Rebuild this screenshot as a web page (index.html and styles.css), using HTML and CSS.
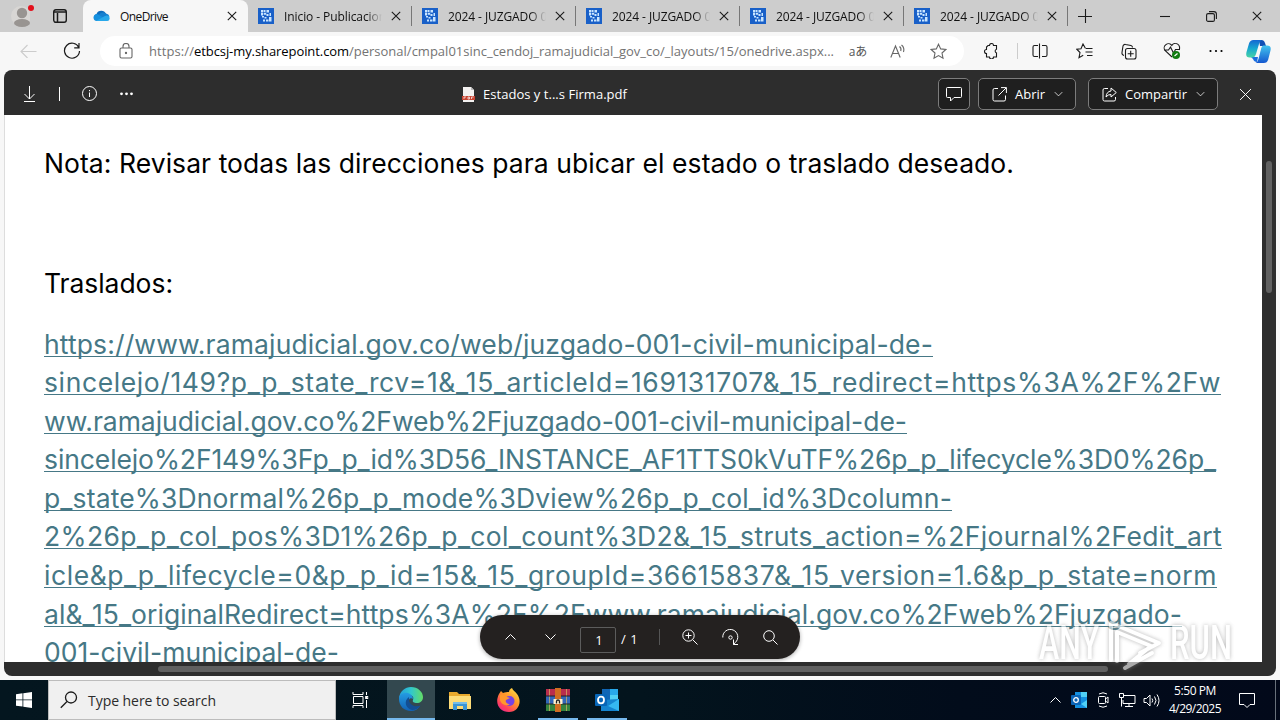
FILE: index.html
```html
<!DOCTYPE html>
<html lang="es">
<head>
<meta charset="utf-8">
<title>OneDrive</title>
<link rel="stylesheet" href="styles.css">
</head>
<body>
<svg class="defs" width="0" height="0">
  <symbol id="x" viewBox="0 0 10 10"><path d="M.8.8l8.4 8.4M9.2.8L.8 9.2"/></symbol>
  <symbol id="fav" viewBox="0 0 16 16"><rect width="16" height="16" fill="#1960c8"/><path fill="#c9e5ff" d="M3 2h2v2.500H3zM5.500 2h2v2h-2zM8.500 2h2.500v2.500H8.500zM3 5h2v2.500H3zM5.700 4.800h2.500v2H5.700zM4 8h2v1.500H4zM8.500 6h2v2h-2zM11.500 5h1.500v3h-1.500zM6.500 9h2v1.500h-2zM5 11.500h2v2H5zM8 11.500h2.500v2H8zM11 9h2.500v4.500H11z"/></symbol>
  <symbol id="chev" viewBox="0 0 12 8"><path d="M1 1.500l5 5 5-5"/></symbol>
</svg>

<header class="tabs">
  <div class="profile"><svg width="30" height="32" viewBox="0 0 30 32"><circle cx="21" cy="16" r="10" fill="#d8d6d4"/><circle cx="22" cy="13" r="5.200" fill="#989491"/><ellipse cx="22" cy="23" rx="8" ry="4" fill="#989491"/></svg><i class="dot"></i></div>
  <div class="workspace"><svg width="14" height="14" viewBox="0 0 14 14" class="ln"><rect x=".7" y=".7" width="12.600" height="12.600" rx="2.200" stroke-width="1.400"/><path d="M1 3h12M4.500 4v9" stroke-width="1.500"/></svg></div>
  <div class="tab active"><svg class="ico" width="17" height="12" viewBox="0 0 17 12"><path d="M3 10.500A3.400 3.400 0 013.500 4 5.200 5.200 0 0113 3.800L8 9z" fill="#0f6cbd"/><path d="M6 4.500a5 5 0 017-1 4 4 0 013.500 3L9 9z" fill="#1580d0"/><path d="M.5 8a3.500 3.500 0 015-3.500L15 11H4A3.500 3.500 0 01.5 8z" fill="#1490df"/><path d="M3 11l9-5a3 3 0 014.700 2.500A2.700 2.700 0 0114 11z" fill="#28a8ea"/></svg><span class="name"><span data-fit="48">OneDrive</span></span><svg class="cl ln" width="10" height="10"><use href="#x"/></svg></div>
  <div class="tab"><svg class="ico" width="16" height="16"><use href="#fav"/></svg><span class="name fade"><span data-fit="102">Inicio - Publicacion</span></span><svg class="cl ln" width="10" height="10"><use href="#x"/></svg></div>
  <div class="tab"><svg class="ico" width="16" height="16"><use href="#fav"/></svg><span class="name fade"><span data-fit="106">2024 - JUZGADO 00</span></span><svg class="cl ln" width="10" height="10"><use href="#x"/></svg></div>
  <div class="tab"><svg class="ico" width="16" height="16"><use href="#fav"/></svg><span class="name fade"><span data-fit="106">2024 - JUZGADO 00</span></span><svg class="cl ln" width="10" height="10"><use href="#x"/></svg></div>
  <div class="tab"><svg class="ico" width="16" height="16"><use href="#fav"/></svg><span class="name fade"><span data-fit="106">2024 - JUZGADO 00</span></span><svg class="cl ln" width="10" height="10"><use href="#x"/></svg></div>
  <div class="tab"><svg class="ico" width="16" height="16"><use href="#fav"/></svg><span class="name fade"><span data-fit="106">2024 - JUZGADO 00</span></span><svg class="cl ln" width="10" height="10"><use href="#x"/></svg></div>
  <div class="plus"><svg class="ln" width="14" height="14" viewBox="0 0 14 14"><path d="M7.500 0v14M0 7.500h14"/></svg></div>
  <div class="win"><svg class="ln" width="10" height="10" viewBox="0 0 10 10"><path d="M0 5.500h10"/></svg></div>
  <div class="win"><svg class="ln" width="11" height="11" viewBox="0 0 11 11"><rect x=".6" y="2.600" width="7.800" height="7.800" rx="1.500"/><path d="M3 .6h4.900a2.500 2.500 0 012.500 2.500V8"/></svg></div>
  <div class="win"><svg class="ln" width="10" height="10"><use href="#x"/></svg></div>
</header>

<nav class="bar">
  <div class="nv back"><svg class="ln pale" width="17" height="14" viewBox="0 0 17 14"><path d="M16.500 7.500H1M7.500 1L1 7.500 7.500 14"/></svg></div>
  <div class="nv"><svg class="ln" width="18" height="18" viewBox="0 0 18 18"><path d="M15.800 5.500A7.500 7.500 0 1016.500 9M16 1v4.800h-4.800" stroke-width="1.200"/></svg></div>
  <div class="url">
    <svg class="ln grey lock" width="14" height="16" viewBox="0 0 14 16"><rect x="1" y="5" width="12" height="10" rx="1.500"/><path d="M4 5V3.500a3 3 0 016 0V5"/><circle cx="7" cy="10" r=".6" fill="#666"/></svg>
    <span class="addr"><span data-fit="45">https://</span><b data-fit="155">etbcsj-my.sharepoint.com</b><span data-fit="485">/personal/cmpal01sinc_cendoj_ramajudicial_gov_co/_layouts/15/onedrive.aspx...</span></span>
    <div class="pi tr">aあ</div>
    <div class="pi"><svg class="ln grey" width="16" height="14" viewBox="0 0 16 14"><path d="M.8 13.500L5.500 2l4.700 11.500M2.500 9.500h6M9.500 2.500a4 4 0 011.200 4.500M11.500 1a6.500 6.500 0 012 7"/></svg></div>
    <div class="pi"><svg class="ln grey" width="17" height="17" viewBox="0 0 17 17"><path d="M8.500 1.200l2.200 4.700 5.100.6-3.800 3.500 1 5.200-4.500-2.600L4 15.200l1-5.200-3.800-3.500 5.100-.6z"/></svg></div>
  </div>
  <div class="tool"><svg class="ln" width="16" height="16" viewBox="0 0 16 16"><path d="M5 2.500H6.500a2 2 0 014 0H13.500V6.200a2 2 0 000 3.800v4h-3a2 2 0 01-4 0H3.500V10.500a2 2 0 110-4V4z" stroke-width="1.100"/></svg></div>
  <div class="vs"></div>
  <div class="tool"><svg class="ln" width="16" height="16" viewBox="0 0 16 16"><path d="M6 2.500H2.500a1.500 1.500 0 00-1.500 1.500v8a1.500 1.500 0 001.500 1.500H6M10 2.500h3.500A1.500 1.500 0 0115 4v8a1.500 1.500 0 01-1.500 1.500H10M7.500 .5v15"/></svg></div>
  <div class="tool"><svg class="ln" width="17" height="16" viewBox="0 0 17 16"><path d="M9.500 5.500L7 1 5 5.800.8 6.200 4 9.500l-1 5.200 4.200-2.500M10 5.500h6.500M9.500 9h7M11 12.500h5.500"/></svg></div>
  <div class="tool"><svg class="ln" width="17" height="17" viewBox="0 0 17 17"><path d="M4 12.500a2.500 2.500 0 01-2-3L3 3a2 2 0 012.500-1.500l5.500 1a2 2 0 011.500 2"/><rect x="5.500" y="5.500" width="10.500" height="10.500" rx="2"/><path d="M10.700 7.800v6M7.700 10.800h6"/></svg></div>
  <div class="tool"><svg class="ln" width="18" height="18" viewBox="0 0 18 18"><path d="M9 15L2 8.500A4 4 0 018.800 3.500 4 4 0 0116 8M1 8h4.500l2-3 3 6 2-3.500H17"/><circle cx="13" cy="13" r="4" fill="#107c10" stroke="none"/><path d="M11.500 14l3-2.500" stroke="#fff"/></svg></div>
  <div class="tool"><svg width="14" height="4" viewBox="0 0 14 4"><circle cx="1.500" cy="2" r="1.100"/><circle cx="7" cy="2" r="1.100"/><circle cx="12.500" cy="2" r="1.100"/></svg></div>
  <div class="tool cop"><svg width="25" height="23" viewBox="0 0 25 23"><defs><linearGradient id="ca" x2="0" y2="1"><stop stop-color="#1567d2"/><stop offset=".5" stop-color="#18a9cf"/><stop offset="1" stop-color="#48d3a5"/></linearGradient><linearGradient id="cb" x2="0" y2="1"><stop stop-color="#43c4ef"/><stop offset="1" stop-color="#1558cf"/></linearGradient></defs><path fill="#1250b5" d="M13 0h2.500q2.500 0 3.500 3l1 3h-6z"/><path fill="#1b6fe0" d="M5 17h7l-1 5q-3 0-4-3z"/><path fill="url(#ca)" d="M7.500 0H16q-2 .5-3 4l-3 10q-1 3.500-4 3.500H3.500Q-.8 17.500.5 12L3 3.500Q4 0 7.500 0z"/><path fill="url(#cb)" d="M17.500 5.500H21q4.700 0 3.500 5l-2.300 9q-1 3.500-4.500 3.500H9.500q2-.5 3-4l2.500-10q.8-3.500 2.500-3.500z"/><path fill="#f7f7f7" d="M13.200 7h2l-2.700 9h-2.200z"/></svg></div>
</nav>

<main class="viewer">
  <div class="head">
    <div class="left">
      <div class="hi"><svg class="ln w" width="12" height="16" viewBox="0 0 12 16"><path d="M5.500 0v13M.5 8l5 5 5-5M0 15.500h11"/></svg></div>
      <div class="hi narrow"><i class="bar1"></i></div>
      <div class="hi"><svg class="ln w" width="16" height="16" viewBox="0 0 16 16"><circle cx="7.500" cy="7.500" r="7"/><path d="M7.500 6.500v4.500M7.500 4v1.200"/></svg></div>
      <div class="hi"><svg class="wf" width="14" height="4" viewBox="0 0 14 4"><circle cx="1.500" cy="1.800" r="1.400"/><circle cx="6.500" cy="1.800" r="1.400"/><circle cx="11.500" cy="1.800" r="1.400"/></svg></div>
    </div>
    <div class="title"><svg width="13" height="15" viewBox="0 0 13 15"><path d="M1 0h8l3 3v12H1z" fill="#f4f2f1"/><path d="M9 0v3h3" fill="#bbb"/><rect y="9" width="13" height="4" fill="#c84432"/><path d="M2 12v-2h2M6 12v-2h1.500v2zM9.500 12v-2h2" fill="none" stroke="#fff" stroke-width=".7"/></svg><span data-fit="144">Estados y t...s Firma.pdf</span></div>
    <div class="acts">
      <div class="btn sq"><svg class="ln w" width="16" height="16" viewBox="0 0 16 16"><path d="M1.500 1.500h13a1 1 0 011 1v8a1 1 0 01-1 1H8L4.500 15v-3.500h-3a1 1 0 01-1-1v-8a1 1 0 011-1z"/></svg></div>
      <div class="btn open"><svg class="ln w" width="15" height="15" viewBox="0 0 15 15"><path d="M6 1.500H2.500A1.500 1.500 0 001 3v9.500A1.500 1.500 0 002.500 14H12a1.500 1.500 0 001.500-1.500V8.500M9 .6h5.400V6M14.200.8L6.500 8.500"/></svg><span data-fit="30">Abrir</span><svg class="ln w" width="9" height="6"><use href="#chev"/></svg></div>
      <div class="btn share"><svg class="ln w" width="15" height="15" viewBox="0 0 15 15"><path d="M6 1.500H2.500A1.500 1.500 0 001 3v9.500A1.500 1.500 0 002.500 14H12a1.500 1.500 0 001.500-1.500V10M9 1l5.300 4.500L9 10V7.500Q6 7.300 4 10q.5-5.500 5-6z"/></svg><span data-fit="62">Compartir</span><svg class="ln w" width="9" height="6"><use href="#chev"/></svg></div>
      <div class="close"><svg class="ln w thin" width="13" height="13"><use href="#x"/></svg></div>
    </div>
  </div>
  <div class="body">
    <article class="page">
      <p data-fit="970">Nota: Revisar todas las direcciones para ubicar el estado o traslado deseado.</p>
      <p class="sub" data-fit="129">Traslados:</p>
      <div class="links">
        <a data-fit="889">https://www.ramajudicial.gov.co/web/juzgado-001-civil-municipal-de-</a>
        <a data-fit="1177">sincelejo/149?p_p_state_rcv=1&amp;_15_articleId=169131707&amp;_15_redirect=https%3A%2F%2Fw</a>
        <a data-fit="863">ww.ramajudicial.gov.co%2Fweb%2Fjuzgado-001-civil-municipal-de-</a>
        <a data-fit="1172">sincelejo%2F149%3Fp_p_id%3D56_INSTANCE_AF1TTS0kVuTF%26p_p_lifecycle%3D0%26p_</a>
        <a data-fit="908">p_state%3Dnormal%26p_p_mode%3Dview%26p_p_col_id%3Dcolumn-</a>
        <a data-fit="1178">2%26p_p_col_pos%3D1%26p_p_col_count%3D2&amp;_15_struts_action=%2Fjournal%2Fedit_art</a>
        <a data-fit="1173">icle&amp;p_p_lifecycle=0&amp;p_p_id=15&amp;_15_groupId=36615837&amp;_15_version=1.6&amp;p_p_state=norm</a>
        <a data-fit="1138">al&amp;_15_originalRedirect=https%3A%2F%2Fwww.ramajudicial.gov.co%2Fweb%2Fjuzgado-</a>
        <a data-fit="295">001-civil-municipal-de-</a>
      </div>
    </article>
    <div class="vscroll"><i></i></div>
  </div>
  <div class="hscroll"><i></i></div>
  <div class="pager">
    <div class="pc"><svg class="ln w flip" width="13" height="8"><use href="#chev"/></svg></div>
    <div class="pc"><svg class="ln w" width="13" height="8"><use href="#chev"/></svg></div>
    <div class="num">1</div><div class="of">/ 1</div><i class="psep"></i>
    <div class="pc"><svg class="ln w" width="16" height="16" viewBox="0 0 16 16"><circle cx="6.500" cy="6.500" r="5.700"/><path d="M10.800 10.800L15.500 15.500M6.500 3.500v6M3.500 6.500h6"/></svg></div>
    <div class="pc"><svg class="ln w" width="17" height="17" viewBox="0 0 17 17"><path d="M.8 8.500a7.500 7.500 0 1112.500 5l-1.800 2M11.500 10.500v5h4.500"/><circle cx="8.500" cy="8.500" r="1.700"/></svg></div>
    <div class="pc"><svg class="ln w" width="15" height="15" viewBox="0 0 15 15"><circle cx="6" cy="6" r="5.300"/><path d="M10 10l4.500 4.500"/></svg></div>
  </div>
</main>

<footer class="task">
  <div class="start"><svg width="16" height="16" viewBox="0 0 16 16"><path fill="#fff" d="M0 2.200L6.500 1.300V7.500H0zM7.300 1.200L16 0v7.500H7.300zM0 8.300h6.500v6.300L0 13.700zM7.300 8.300H16V16l-8.700-1.200z"/></svg></div>
  <div class="search"><svg class="ln" width="18" height="18" viewBox="0 0 18 18"><circle cx="11" cy="6.500" r="5.500" stroke-width="1.300"/><path d="M7 10.500L.8 16.700" stroke-width="1.300"/></svg><span data-fit="128">Type here to search</span></div>
  <div class="app tv"><svg class="ln w" width="17" height="16" viewBox="0 0 17 16"><path d="M1 0v2.500h10V0M1.500 4.500h9.500v7h-9.500zM1 16v-2.500h10V16M14.500 0v3M14.500 8v8"/><rect x="13.700" y="4.500" width="2" height="2" fill="#fff"/></svg></div>
  <div class="app on wide"><svg width="24" height="24" viewBox="0 0 24 24"><defs><linearGradient id="eg"><stop stop-color="#249edb"/><stop offset=".5" stop-color="#31c7cd"/><stop offset="1" stop-color="#64dc65"/></linearGradient><linearGradient id="eb" y2="1" x2="0"><stop stop-color="#249ce3"/><stop offset="1" stop-color="#1261b4"/></linearGradient></defs><path fill="url(#eg)" d="M0 11C1 4 6 0 12 0c7 0 12 5 12 10 0 4-3 6-6 6-3 0-5-1-4-3 2-5-5-7-14-2z"/><path fill="url(#eb)" d="M0 12c0-5 5-7 9-6 3 1 5 3 5 6-3-2-5 1-4 4 1 4 6 5 11 3-2 3-5 5-9 5C5 24 0 19 0 12z"/><path fill="#134e93" d="M10 10c-6 4-3 12 3 13 4 0 7-2 8.500-4.500C15 21 10 17 10 13z"/></svg></div>
  <div class="app"><svg width="22" height="19" viewBox="0 0 22 19"><path fill="#e8a92d" d="M0 1h8l2 2h11v15H0z"/><path fill="#fddc78" d="M0 5h22v13H0z"/><path fill="#3b95d5" d="M4 11h14v8h-4v-4H8v4H4z"/><path fill="#74bce9" d="M4 11h14v2H4z"/></svg></div>
  <div class="app"><svg width="24" height="24" viewBox="0 0 24 24"><defs><linearGradient id="ff" x1=".9" y1="0" x2=".2" y2="1"><stop stop-color="#ffe44c"/><stop offset=".45" stop-color="#ff9628"/><stop offset=".8" stop-color="#ff405e"/><stop offset="1" stop-color="#e7288f"/></linearGradient></defs><path fill="url(#ff)" d="M2 6l2-3 2 2c2-1 4-1 6-1 0-2 1-3 3-4 1 3 3 3 5 6 6 8 1 18-8 18S-3 16 2 6z"/><circle cx="12.500" cy="13" r="5" fill="#7542e5"/><path fill="#ff982c" d="M3 7c3-1 5 0 7 2l3 1-4 2c-1 2 1 4 4 4-4 3-9 0-10-4z"/></svg></div>
  <div class="app on2"><svg width="24" height="24" viewBox="0 0 24 24"><path fill="#b92d4d" d="M0 1h24v7H0z"/><path fill="#3267b8" d="M0 8h24v8H0z"/><path fill="#35843f" d="M0 16h24v7H0z"/><path stroke="#d8b866" stroke-width=".7" d="M3.500 1v22M20.500 1v22"/><path stroke="#222" d="M0 8h24M0 16h24"/><path fill="#d06d22" d="M9 0h6v24H9z"/><path fill="#fff0cc" d="M7.500 11h9v5h-9z"/><path fill="none" stroke="#222" stroke-width="1.300" d="M10.500 15.500v-2a1.500 1.500 0 013 0v2"/></svg></div>
  <div class="app on2"><svg width="24" height="22" viewBox="0 0 24 22"><path fill="#1066b5" d="M7 0h16v12H7z"/><path fill="#28a8ea" d="M15 0h8v6h-8z"/><path fill="#50d0f5" d="M15 6h8v6h-8z"/><path fill="#1585d0" d="M6 11l18-1v12H6z"/><path fill="#35b8f1" d="M24 10v12L13 17z"/><rect y="5" width="12" height="12" rx="1" fill="#0866b7"/><ellipse cx="6" cy="11" rx="3" ry="3.300" fill="none" stroke="#fff" stroke-width="1.800"/></svg></div>
  <div class="tray">
    <div class="ti"><svg class="ln w flip" width="13" height="8"><use href="#chev"/></svg></div>
    <div class="ti"><svg width="16" height="16" viewBox="0 0 16 16"><path fill="#1490df" d="M4 0h12v16H4z"/><path fill="#50d0f5" d="M10 0h6v5h-6zM10 12l6-4v8z"/><rect y="3" width="10" height="10" rx="1" fill="#0b64b5"/><circle cx="5" cy="8" r="2.300" fill="none" stroke="#fff" stroke-width="1.300"/></svg></div>
    <div class="ti"><svg class="ln w" width="12" height="16" viewBox="0 0 12 16"><rect x="1.500" y="4.500" width="7" height="7" rx="1"/><path d="M8.500 7l2.500-2v6L8.500 9M2 2q4-2.500 8 0M2 14q4 2.500 8 0"/></svg></div>
    <div class="ti"><svg class="ln w" width="17" height="14" viewBox="0 0 17 14"><path d="M5 2.500h11v8H4V7M10 10.500v3M6 13.500h8M.5.500h4v4h-4zM2.500 4.500v9"/></svg></div>
    <div class="ti"><svg class="ln w" width="17" height="13" viewBox="0 0 17 13"><path d="M1 4.500h2.500L7 1v11L3.500 8.500H1zM9 4.500q1.500 2 0 4M11.500 2.500q3 4 0 8M14 .5q4 6 0 12"/></svg></div>
    <div class="clock"><span data-fit="42">5:50 PM</span><span data-fit="52">4/29/2025</span></div>
    <div class="note"><svg class="ln w" width="16" height="16" viewBox="0 0 16 16"><path d="M.5 1.500h15v11H11l-3 3-3-3H.5z"/></svg></div>
  </div>
</footer>

<svg class="mark" width="204" height="56" viewBox="0 0 204 56">
  <g class="mt"><text x="4" y="43" textLength="60" lengthAdjust="spacingAndGlyphs">ANY</text><text x="135" y="43" textLength="62" lengthAdjust="spacingAndGlyphs">RUN</text></g>
  <path class="play" d="M76 44V7l48 20-19 10M82 45V16l34 14-22 18M90 52l27-15"/>
</svg>
<script src="fit.js"></script>
</body>
</html>
```
FILE: styles.css
```css
* { box-sizing: border-box; }
body { margin: 0; width: 1280px; height: 720px; overflow: hidden; position: relative; display: flex; flex-direction: column; background: #f7f7f7; font-family: "Open Sans", "Noto Sans", "Noto Sans CJK JP", sans-serif; font-size: 12px; color: #111; }
svg { display: block; flex: none; }
.defs { position: absolute; }
.ln { fill: none; stroke: #1b1b1b; stroke-width: 1.1; }
.ln.w { stroke: #fff; stroke-width: 1; }
.ln.thin { stroke-width: .75; }
.ln.grey { stroke: #666; }
.ln.pale { stroke: #ccc; }
.wf { fill: #fff; }
.flip { transform: scaleY(-1); }
[data-fit] { white-space: nowrap; }

.tabs { height: 32px; flex: none; display: flex; background: #cdcdcd; }
.profile { width: 38px; position: relative; }
.dot { position: absolute; left: 28px; top: 5px; width: 6px; height: 6px; border-radius: 50%; background: #e3101c; }
.workspace { width: 45px; display: flex; align-items: center; padding-left: 15px; }
.tab { width: 164px; display: flex; align-items: center; padding-left: 10px; border-right: 1px solid #858585; border-image: linear-gradient(transparent 20%, #777 20% 80%, transparent 80%) 1; }
.tab.active { width: 165px; background: #f7f7f7; border: 0; border-radius: 8px 8px 0 0; }
.ico { margin-right: 10px; }
.name { width: 101px; overflow: hidden; white-space: nowrap; }
.fade { width: 98px; mask-image: linear-gradient(90deg, #000 84%, transparent); }
.cl { margin-left: 9px; }
.active .cl { margin-left: 6px; }
.plus { flex: none; width: 74px; display: flex; align-items: center; padding-left: 10px; }
.win { width: 46px; display: flex; align-items: center; justify-content: center; flex: none; }

.bar { height: 38px; flex: none; display: flex; align-items: center; }
.nv { width: 44px; display: flex; justify-content: center; }
.back { margin-left: 6px; }
.url { height: 30px; margin-left: 6px; width: 864px; border-radius: 15px; background: #fff; display: flex; align-items: center; padding-left: 19px; margin-right: 5px; }
.lock { margin-right: 16px; }
.addr { width: 689px; font-size: 13px; color: #737373; white-space: nowrap; }
.addr b { color: #000; font-weight: 400; }
.pi { width: 40px; display: flex; justify-content: center; }
.tr { font-size: 12px; color: #555; }
.tool { width: 44px; display: flex; justify-content: center; }
.vs { width: 5px; height: 16px; border-right: 1px solid #ccc; }
.cop { width: 40px; }

.viewer { position: relative; width: 1272px; height: 606px; margin: 0 0 4px 4px; flex: none; display: flex; flex-direction: column; background: #2d2d2d; border-radius: 8px; overflow: hidden; }
.head { height: 45px; flex: none; display: flex; align-items: center; padding-top: 3px; color: #fff; }
.left { width: 458px; display: flex; align-items: center; padding-left: 7px; }
.hi { width: 37px; display: flex; justify-content: center; }
.narrow { width: 23px; }
.bar1 { width: 1px; height: 14px; background: #fff; }
.title { width: 476px; display: flex; align-items: center; gap: 8px; font-size: 13px; }
.acts { display: flex; align-items: center; }
.btn { height: 32px; border: 1px solid #7c7c7c; border-radius: 5px; background: #1f1f1f; display: flex; align-items: center; padding-left: 13px; font-size: 13px; }
.btn span { margin: 0 9px 0 8px; }
.sq { width: 32px; padding: 0; justify-content: center; }
.open { width: 98px; margin: 0 12px 0 8px; }
.share { width: 130px; }
.close { width: 54px; display: flex; justify-content: center; }
.body { height: 547px; flex: none; display: flex; }
.page { width: 1258px; height: 547px; overflow: hidden; background: #fff; border-left: 1px solid #ddd; padding: 28.600px 0 0 39px; font: 26.500px/38.550px Inter, Roboto, sans-serif; color: #000; display: flex; flex-direction: column; align-items: flex-start; }
.page p { margin: 0; }
.page .sub { margin: 81.400px 0 22.600px; }
.links { display: flex; flex-direction: column; align-items: flex-start; color: #467886; }
.links a { display: block; text-decoration: underline; text-decoration-thickness: 1px; text-underline-offset: 1.500px; text-decoration-skip-ink: none; }
.vscroll { width: 14px; padding: 46px 0 0 4px; }
.vscroll i { display: block; width: 6px; height: 132px; border-radius: 3px; background: #606060; }
.hscroll { height: 14px; padding: 4px 0 0 154px; }
.hscroll i { display: block; width: 950px; height: 6px; border-radius: 3px; background: #606060; }
.pager { position: absolute; left: 476px; top: 545px; width: 320px; height: 44px; border-radius: 22px; background: #242120; box-shadow: 0 1px 4px #0005; display: flex; align-items: center; padding-left: 10px; color: #fff; font-size: 13px; }
.pc { width: 40px; display: flex; justify-content: center; }
.num { width: 36px; height: 26px; margin: 6px 5px 0 10px; border: 1px solid #5c5c5c; border-radius: 2px; text-align: center; line-height: 25px; padding-left: 2px; }
.of { width: 38px; padding-top: 4px; word-spacing: 1px; }
.psep { width: 1px; height: 16px; background: #555; margin-right: 10px; }

.task { height: 40px; flex: none; display: flex; background: linear-gradient(90deg, #04161f, #03141d 50%, #020c1b 75%, #02091a); color: #fff; }
.start { width: 48px; display: flex; align-items: center; justify-content: center; }
.search { width: 288px; background: #f0f0f0; border: 1px solid #bcbcbc; color: #2b2b2b; display: flex; align-items: center; gap: 10px; padding-left: 11px; font-size: 14px; }
.app { width: 49px; display: flex; align-items: center; justify-content: center; }
.tv { width: 51px; padding-right: 2px; }
.wide { width: 48px; background: #33484f; border-bottom: 2px solid #76b9ed; }
.on2 { background: linear-gradient(#76b9ed, #76b9ed) center bottom / 40px 2px no-repeat; }
.tray { margin-left: auto; width: 237px; display: flex; align-items: center; }
.ti { width: 24px; display: flex; justify-content: center; }
.clock { width: 64px; display: flex; flex-direction: column; align-items: center; line-height: 18px; font-size: 12px; }
.note { width: 49px; height: 40px; display: flex; align-items: center; justify-content: center; padding-right: 8px; border-right: 1px solid #68717b; }

.mark { position: absolute; left: 1035px; top: 616px; filter: drop-shadow(0 0 2px #888); opacity: .6; }
.mt { font: 500 49px Roboto, sans-serif; fill: #fff; }
.play { fill: none; stroke: #fff; stroke-width: 4; stroke-linejoin: round; stroke-linecap: round; }
```
FILE: fit.js
```js
// Spread each label over its column width by adjusting the letter spacing.
document.querySelectorAll('[data-fit]').forEach(function (el) {
  var range = document.createRange();
  range.selectNodeContents(el);
  var extra = Number(el.dataset.fit) - range.getBoundingClientRect().width;
  el.style.letterSpacing = extra / el.textContent.length + 'px';
});
```
